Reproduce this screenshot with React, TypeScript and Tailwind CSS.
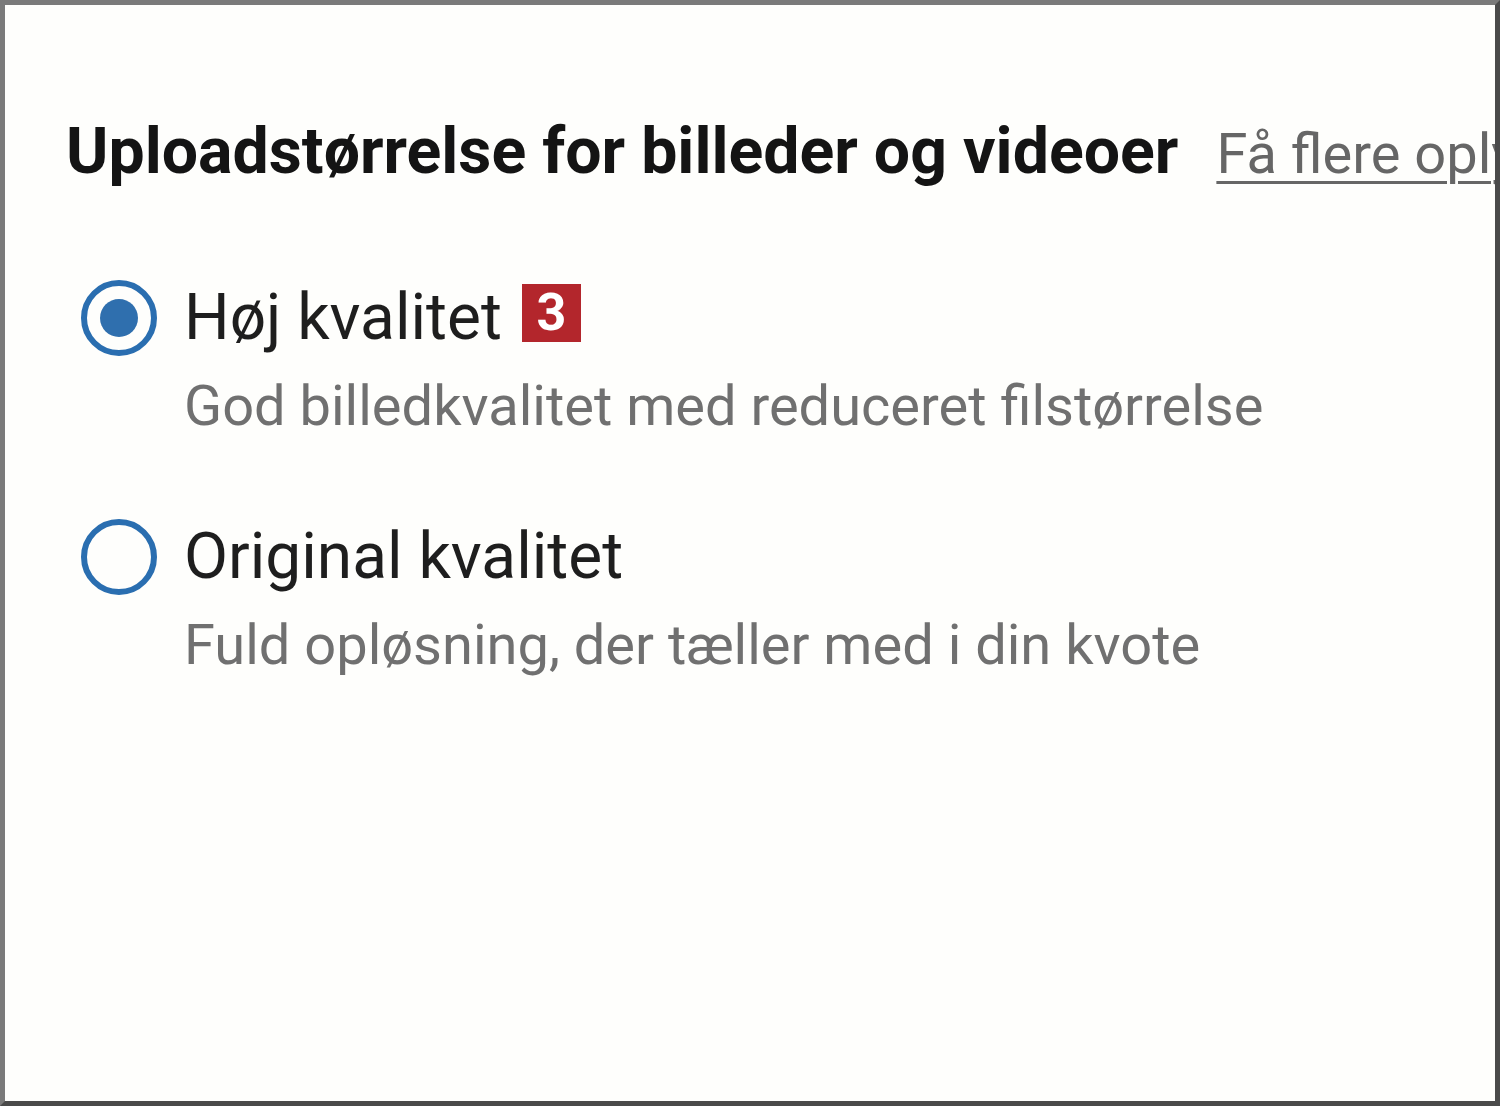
import React from 'react';

const options = [
  { title: 'Høj kvalitet', desc: 'God billedkvalitet med reduceret filstørrelse', checked: true, badge: '3' },
  { title: 'Original kvalitet', desc: 'Fuld opløsning, der tæller med i din kvote', checked: false },
];

const Radio: React.FC<{ checked: boolean }> = ({ checked }) => (
  <div className="w-[76px] h-[76px] rounded-full border-[6px] border-[#2a6eb0] flex items-center justify-center shrink-0">
    {checked && <div className="w-[38px] h-[38px] rounded-full bg-[#2f6fae]" />}
  </div>
);

const App: React.FC = () => {
  return (
    <div
      className="w-[1500px] h-[1106px] overflow-hidden bg-[#fefefc] border-[5px] border-t-[#7a7a7a] border-l-[#7a7a7a] border-r-[#4a4a4a] border-b-[#4a4a4a]"
      style={{ fontFamily: 'Roboto, "Noto Sans", sans-serif' }}
    >
      <div className="pl-[61px] pt-[106px] whitespace-nowrap flex items-baseline gap-[38px]">
        <h2 className="text-[64.4px] font-bold text-[#141414] leading-[80px]">
          Uploadstørrelse for billeder og videoer
        </h2>
        <a href="#" className="text-[56px] text-[#666666] underline underline-offset-[8px] decoration-[3px]">
          Få flere oplysninger
        </a>
      </div>

      <div className="mt-[84px] pl-[76px] flex flex-col gap-[81px]">
        {options.map((o) => (
          <div key={o.title} className="flex flex-col">
            <div className="flex items-center h-[76px] gap-[27px]">
              <Radio checked={o.checked} />
              <span className="text-[64px] text-[#1e1e1e] leading-[76px]">{o.title}</span>
              {o.badge && (
                <span className="-ml-[7px] -mt-[10px] w-[59px] h-[58px] bg-[#b3262c] text-white font-bold text-[52px] leading-[58px] flex items-center justify-center">
                  {o.badge}
                </span>
              )}
            </div>
            <span className="ml-[103px] mt-[18px] text-[56px] text-[#707070] leading-[64px]">{o.desc}</span>
          </div>
        ))}
      </div>
    </div>
  );
};

export default App;
